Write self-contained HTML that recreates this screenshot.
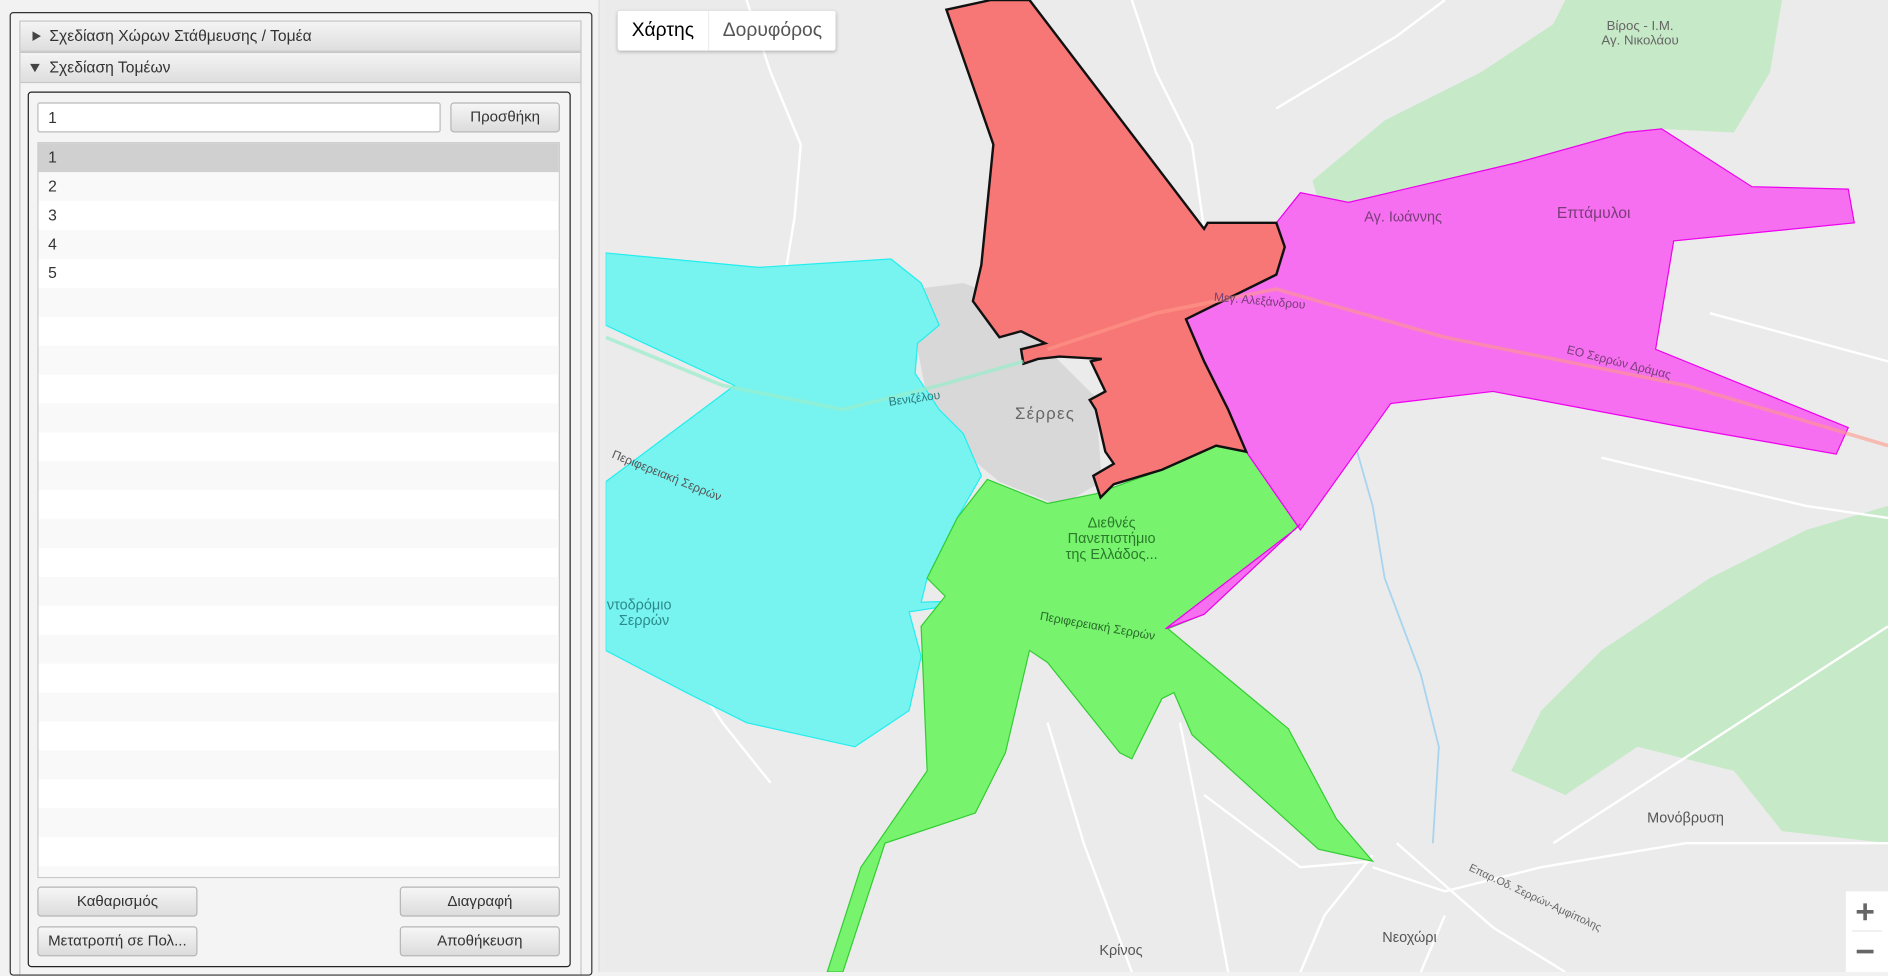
<!DOCTYPE html>
<html><head><meta charset="utf-8"><style>
html,body{margin:0;padding:0;width:1888px;height:972px;overflow:hidden;background:#f2f2f2;}
#w{position:absolute;left:0;top:0;width:1568px;height:807px;transform:scale(1.20408,1.2045);transform-origin:0 0;font-family:"Liberation Sans","DejaVu Sans",sans-serif;font-size:13px;color:#333;}
.a{position:absolute;box-sizing:border-box;}
.hdr{background:linear-gradient(#f4f4f4,#dedede);border:1px solid #c6c6c6;height:26px;line-height:24px;padding-left:24px;font-size:13px;color:#333;}
.tri{position:absolute;left:10px;top:8px;width:0;height:0;}
.btn{background:linear-gradient(#f6f6f6,#dcdcdc);border:1px solid #b5b5b5;border-radius:3px;text-align:center;line-height:22px;font-size:12.5px;color:#333;}
.row{position:absolute;left:0;width:433px;height:24px;line-height:24px;padding-left:8px;box-sizing:border-box;font-size:13px;}
.lbl{position:absolute;font-size:10px;color:#777;white-space:nowrap;}
</style></head><body><div id="w">
<!-- left panel -->
<div class="a" style="left:8px;top:10px;width:484px;height:800px;border:1px solid #333;border-radius:3px;background:#f4f4f4;"></div>
<div class="a hdr" style="left:16px;top:17px;width:467px;"><div class="tri" style="border-left:7px solid #444;border-top:4.5px solid transparent;border-bottom:4.5px solid transparent;"></div>Σχεδίαση Χώρων Στάθμευσης / Τομέα</div>
<div class="a hdr" style="left:16px;top:43px;width:467px;"><div class="tri" style="top:9px;left:8px;border-top:7px solid #444;border-left:4.5px solid transparent;border-right:4.5px solid transparent;"></div>Σχεδίαση Τομέων</div>
<div class="a" style="left:16px;top:69px;width:467px;height:740px;border-left:1px solid #c6c6c6;border-right:1px solid #c6c6c6;"></div>
<div class="a" style="left:23px;top:76px;width:451px;height:727px;border:1px solid #222;border-radius:3px;background:#f4f4f4;"></div>
<div class="a" style="left:31px;top:85px;width:335px;height:25px;border:1px solid #bbb;border-radius:2px;background:#fff;line-height:23px;padding-left:8px;font-size:13px;">1</div>
<div class="a btn" style="left:374px;top:85px;width:91px;height:25px;">Προσθήκη</div>
<div class="a" style="left:31px;top:118px;width:434px;height:611px;border:1px solid #c8c8c8;background:#fff;overflow:hidden;">
<div class="row" style="top:0;background:#d0d0d0;">1</div>
<div class="row" style="top:24px;background:#f9f9f9;">2</div>
<div class="row" style="top:48px;">3</div>
<div class="row" style="top:72px;background:#f9f9f9;">4</div>
<div class="row" style="top:96px;">5</div>
<div class="row" style="top:120px;background:#f9f9f9;"></div>
<div class="row" style="top:168px;background:#f9f9f9;"></div>
<div class="row" style="top:216px;background:#f9f9f9;"></div>
<div class="row" style="top:264px;background:#f9f9f9;"></div>
<div class="row" style="top:312px;background:#f9f9f9;"></div>
<div class="row" style="top:360px;background:#f9f9f9;"></div>
<div class="row" style="top:408px;background:#f9f9f9;"></div>
<div class="row" style="top:456px;background:#f9f9f9;"></div>
<div class="row" style="top:504px;background:#f9f9f9;"></div>
<div class="row" style="top:552px;background:#f9f9f9;"></div>
<div class="row" style="top:600px;background:#f9f9f9;"></div>
</div>
<div class="a btn" style="left:31px;top:736px;width:133px;height:25px;">Καθαρισμός</div>
<div class="a btn" style="left:332px;top:736px;width:133px;height:25px;">Διαγραφή</div>
<div class="a btn" style="left:31px;top:769px;width:133px;height:25px;">Μετατροπή σε Πολ...</div>
<div class="a btn" style="left:332px;top:769px;width:133px;height:25px;">Αποθήκευση</div>
<div class="a" style="left:497px;top:0;width:6px;height:807px;background:#ececec;border-left:1px solid #ddd;"></div>
<!-- map -->
<svg class="a" style="left:503px;top:0;" width="1065" height="807" viewBox="503 0 1065 807">
<rect x="503" y="0" width="1065" height="807" fill="#ebebeb"/>
<path d="M1090,150 L1150,100 1230,60 1290,20 1300,0 1480,0 1470,60 1440,110 1380,107 1260,135 1120,168 1100,185Z" fill="#c6e9c7"/>
<path d="M1568,420 L1500,440 1420,480 1330,540 1280,590 1255,640 1300,660 1360,620 1440,640 1480,690 1568,700Z" fill="#c6e9c7"/>
<path d="M760,240 L800,235 840,250 880,300 910,330 915,400 880,420 830,400 800,375 770,330 762,290Z" fill="#d8d8d8"/>
<g stroke="#fff" fill="none" stroke-width="2">
<path d="M620,0 L640,60 665,120 660,180 650,240"/><path d="M940,0 L960,60 990,120 1000,190"/>
<path d="M1060,90 L1110,60 1160,30 1200,0"/><path d="M1140,720 L1200,740 1280,720 1400,700 1568,700"/>
<path d="M1140,710 L1100,760 1080,807"/><path d="M1160,700 L1240,770 1300,807"/>
<path d="M1290,700 L1568,520"/><path d="M1200,760 L1180,807"/>
<path d="M560,540 L600,600 640,650"/><path d="M980,600 L1000,700 1020,807"/>
<path d="M870,600 L900,700 940,807"/><path d="M1330,380 L1500,420 1568,430"/>
<path d="M1420,260 L1568,300"/><path d="M1000,660 L1080,720 1140,715"/>
</g>
<path d="M1120,350 L1140,420 1150,480 1180,560 1195,620 1190,700" stroke="#a8d4f0" stroke-width="1.5" fill="none"/>
<path d="M503,210 L630,222 740,215 765,235 780,270 762,285 760,310 780,340 800,360 815,395 795,430 770,480 765,500 820,498 755,508 765,545 755,590 710,620 620,600 570,575 503,540 503,400 610,320 503,270Z" fill="#77f3f0" stroke="#2ee" stroke-width="1"/>
<path d="M820,398 L870,418 910,410 965,390 1010,370 1035,375 1080,435 1000,510 970,522 1070,605 1110,680 1140,715 1095,705 990,610 975,575 965,580 940,630 930,625 870,550 855,540 835,625 810,675 735,700 700,807 687,807 715,720 770,640 765,520 785,495 770,480 795,430Z" fill="#77f36e" stroke="#3c3" stroke-width="1"/>
<path d="M1060,228 L1067,205 1060,185 1080,160 1120,168 1260,135 1350,110 1380,107 1455,155 1535,157 1540,185 1390,200 1375,290 1535,355 1525,377 1400,355 1240,325 1155,335 1080,440 1035,375 1020,340 1000,300 985,265Z M1080,435 L1000,510 968,522 1075,440Z" fill="#f56ff0" stroke="#e0e" stroke-width="1"/>
<path d="M786,8 L823,0 855,0 1000,190 1003,185 1060,185 1067,205 1060,228 985,265 1000,300 1020,340 1035,375 1010,370 965,390 925,402 914,413 908,395 925,385 918,375 910,340 905,332 918,325 906,300 915,298 880,296 862,298 850,302 848,290 868,285 848,275 830,280 808,250 815,220 825,120Z" fill="#f77777" stroke="#111" stroke-width="2"/>
<path d="M870,290 L960,260 1060,240 1200,280 1400,320 1568,370" stroke="#f98" stroke-width="3" fill="none" opacity=".6"/>
<path d="M503,280 L600,320 700,340 780,320 850,300" stroke="#9ec" stroke-width="3" fill="none" opacity=".7"/>
<rect x="1533" y="740" width="35" height="67" fill="#fff"/>
<path d="M1542,757 h14 M1549,750 v14 M1542,790 h14" stroke="#666" stroke-width="3"/>
<line x1="1538" y1="773" x2="1563" y2="773" stroke="#e6e6e6"/>
</svg>
<div class="a" style="left:513px;top:9px;width:181px;height:33px;background:#fff;box-shadow:0 1px 3px rgba(0,0,0,.25);border-radius:2px;font-size:16px;">
<div class="a" style="left:0;top:0;width:76px;height:33px;line-height:33px;text-align:center;color:#000;border-right:1px solid #eee;">Χάρτης</div>
<div class="a" style="left:76px;top:0;width:105px;height:33px;line-height:33px;text-align:center;color:#555;">Δορυφόρος</div></div>
<div class="lbl" style="left:843px;top:335px;font-size:14px;color:#666;letter-spacing:1px;">Σέρρες</div>
<div class="lbl" style="left:1293px;top:169px;font-size:13px;color:#7a3d78;">Επτάμυλοι</div>
<div class="lbl" style="left:1133px;top:173px;font-size:12px;color:#7a3d78;">Αγ. Ιωάννης</div>
<div class="lbl" style="left:1330px;top:16px;font-size:11px;color:#666;text-align:center;line-height:12px;">Βίρος - Ι.Μ.<br>Αγ. Νικολάου</div>
<div class="lbl" style="left:1368px;top:672px;font-size:12px;color:#555;">Μονόβρυση</div>
<div class="lbl" style="left:1148px;top:771px;font-size:12px;color:#555;">Νεοχώρι</div>
<div class="lbl" style="left:913px;top:782px;font-size:12px;color:#555;">Κρίνος</div>
<div class="lbl" style="left:885px;top:428px;font-size:12px;color:#2a7a2a;text-align:center;line-height:13px;">Διεθνές<br>Πανεπιστήμιο<br>της Ελλάδος...</div>
<div class="lbl" style="left:504px;top:496px;font-size:12px;color:#2a8a8a;line-height:13px;">ντοδρόμιο<br>&nbsp;&nbsp;&nbsp;Σερρών</div>
<div class="lbl" style="left:1300px;top:296px;font-size:10px;color:#7a3d78;transform:rotate(14deg);">ΕΟ Σερρών Δράμας</div>
<div class="lbl" style="left:1008px;top:245px;font-size:10px;color:#7a3d78;transform:rotate(5deg);">Μεγ. Αλεξάνδρου</div>
<div class="lbl" style="left:738px;top:326px;font-size:10px;color:#2a7a7a;transform:rotate(-8deg);">Βενιζέλου</div>
<div class="lbl" style="left:863px;top:515px;font-size:10px;color:#2a6a2a;transform:rotate(10deg);">Περιφερειακή Σερρών</div>
<div class="lbl" style="left:505px;top:390px;font-size:10px;color:#555;transform:rotate(22deg);">Περιφερειακή Σερρών</div>
<div class="lbl" style="left:1215px;top:740px;font-size:9px;color:#666;transform:rotate(25deg);">Επαρ.Οδ. Σερρών-Αμφίπολης</div>
</div></body></html>
